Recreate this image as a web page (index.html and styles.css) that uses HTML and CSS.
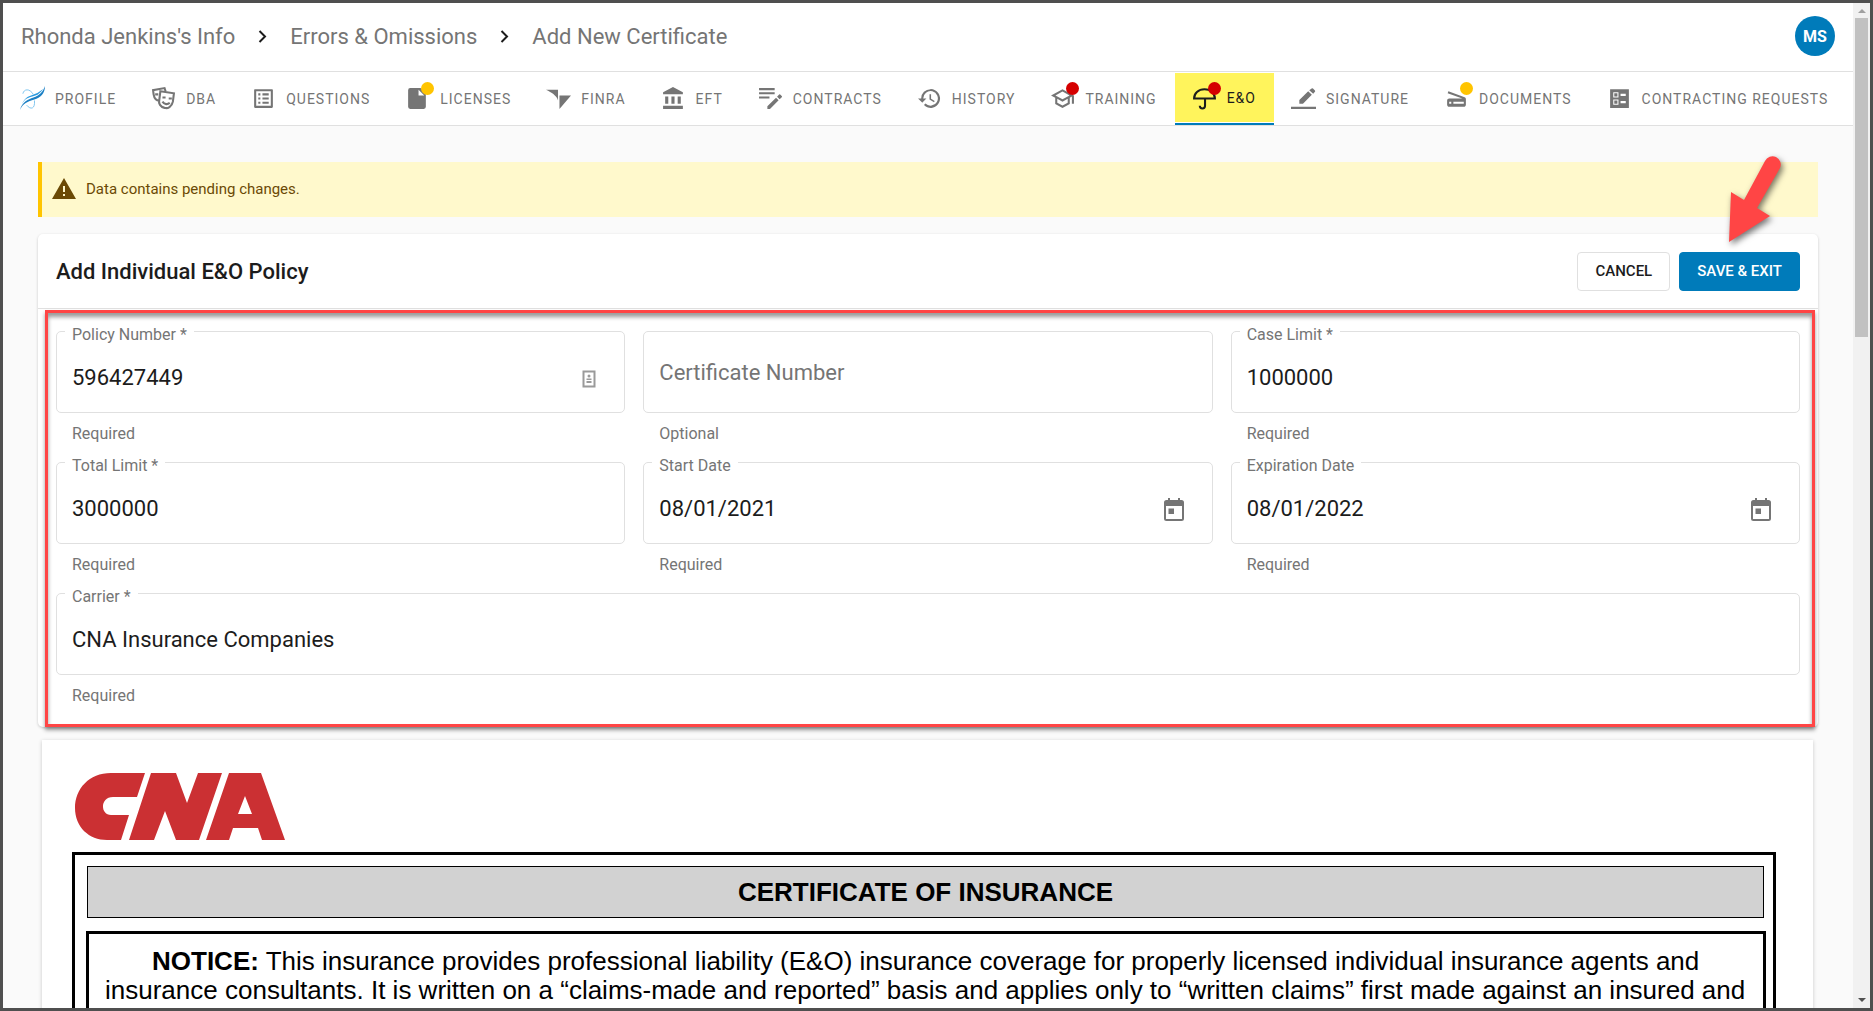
FILE: index.html
```html
<!DOCTYPE html>
<html lang="en">
<head>
<meta charset="utf-8">
<title>Add New Certificate</title>
<link rel="stylesheet" href="styles.css">
</head>
<body>
<div class="window">
  <div class="page">
    <header class="topbar">
      <nav class="crumbs" aria-label="Breadcrumb">
        <a href="#">Rhonda Jenkins's Info</a>
        <svg class="chevron" viewBox="0 0 9 13"><path d="M1.500 1l5.500 5.500L1.500 12"/></svg>
        <a href="#">Errors &amp; Omissions</a>
        <svg class="chevron" viewBox="0 0 9 13"><path d="M1.500 1l5.500 5.500L1.500 12"/></svg>
        <a href="#">Add New Certificate</a>
      </nav>
      <button class="avatar" type="button">MS</button>
    </header>
    <nav class="tabs" aria-label="Sections">
      <a class="tab" href="#"><svg class="icon" viewBox="0 0 26 26"><path d="M0 25C2 17 8 14 14 12 20 10 24 6 26 0c0 8-5 12-11 14C8 16 3 18 0 25z" fill="#1a7fc4"/><path d="M2 19c4-8 10-7 14-9 3-1 6-4 8-7-3 2-5 4-8 5C11 10 5 11 2 19z" fill="#2b9be0"/><path d="M3 8c1-5 7-6 11 1M7 20c4 5 9 4 8-5" fill="none" stroke="#7cc4ee"/></svg><span>PROFILE</span></a>
      <a class="tab" href="#"><svg class="icon" viewBox="0 0 24 24"><g fill="none" stroke="currentColor" stroke-width="2"><path d="M9 5l13 2-1 8c-1 5-5 7-8 6-4-1-6-4-5-8z"/><path d="M8 14C4 14 3 11 2.500 8L2 4l11-2 1 3"/><path d="M11 15c2 3 5 3 7 1"/></g><path d="M11 10h3v2h-3zM17 11h3v2h-3zM4 7h3v2H4z"/></svg><span>DBA</span></a>
      <a class="tab" href="#"><svg class="icon" viewBox="0 0 24 24"><path d="M11 7h6v2h-6zm0 4h6v2h-6zm0 4h6v2h-6zM7 7h2v2H7zm0 4h2v2H7zm0 4h2v2H7zM20.100 3H3.900c-.5 0-.9.4-.9.900v16.200c0 .4.400.900.900.900h16.200c.4 0 .9-.5.9-.9V3.900c0-.5-.5-.9-.9-.9zM19 19H5V5h14v14z"/></svg><span>QUESTIONS</span></a>
      <a class="tab" href="#"><svg class="icon" viewBox="0 0 24 24"><path d="M5 2h10l5 6v12a2 2 0 0 1-2 2H5a2 2 0 0 1-2-2V4a2 2 0 0 1 2-2zM13 3.500V9h5.500z" fill-rule="evenodd"/></svg><i class="dot amber"></i><span>LICENSES</span></a>
      <a class="tab" href="#"><svg class="icon" viewBox="0 0 26 24"><path d="M0 3h12.500v11C11 9 6 6 0 3zM14 9h12L14 23z"/></svg><span>FINRA</span></a>
      <a class="tab" href="#"><svg class="icon" viewBox="0 0 24 24"><path d="M4 10v7h3v-7H4zm6 0v7h3v-7h-3zM2 22h19v-3H2v3zm14-12v7h3v-7h-3zM11.500 1L2 6v2h19V6l-9.500-5z"/></svg><span>EFT</span></a>
      <a class="tab" href="#"><svg class="icon" viewBox="0 0 24 24"><path d="M1 2h15v2H1zm0 4h15v2H1zm0 4h10v2H1zM9 19.500V22h2.500l8.300-8.300-2.500-2.500zM22.800 10.700a.7.700 0 0 0 0-1l-1.500-1.500a.7.700 0 0 0-1 0l-2 2 2.500 2.500z"/></svg><span>CONTRACTS</span></a>
      <a class="tab" href="#"><svg class="icon" viewBox="0 0 24 24"><path d="M13 3a9 9 0 0 0-9 9H1l3.900 3.900.1.100L9 12H6a7 7 0 1 1 2.100 4.900l-1.400 1.400A9 9 0 1 0 13 3zm-1 5v5l4.300 2.500.7-1.200-3.500-2.100V8H12z"/></svg><span>HISTORY</span></a>
      <a class="tab" href="#"><svg class="icon" viewBox="0 0 24 24"><path d="M12 3L1 9l4 2.200v6L12 21l7-3.800v-6l2-1.100V17h2V9L12 3zm6.800 6L12 12.700 5.200 9 12 5.300 18.800 9zM17 16l-5 2.700L7 16v-3.700l5 2.700 5-2.700V16z"/></svg><i class="dot red"></i><span>TRAINING</span></a>
      <a class="tab active" href="#" aria-current="page"><svg class="icon" viewBox="0 0 24 24"><path d="M2 13c0-5 4-9 10-9s10 4 10 9zM12.500 13v7a2.500 2.500 0 0 1-5 0" fill="none" stroke="currentColor" stroke-width="2"/></svg><i class="dot red"></i><span>E&amp;O</span></a>
      <a class="tab" href="#"><svg class="icon" viewBox="0 0 24 24"><path d="M0 20h24v2H0zM8 13.500V17h3.500l8.500-8.500L16.500 5zM23 5.500a1 1 0 0 0 0-1.200l-1.900-1.900a1 1 0 0 0-1.300 0L17.500 4 21.300 7.500z"/></svg><span>SIGNATURE</span></a>
      <a class="tab" href="#"><svg class="icon" viewBox="0 0 24 24"><path d="M19.800 10.700L4.200 5l-.7 1.900L17.600 12H5c-1.100 0-2 .9-2 2v4c0 1.100.9 2 2 2h14c1.100 0 2-.9 2-2v-5.500c0-.8-.5-1.600-1.200-1.800zM7 17H5v-2h2v2zm12 0H9v-2h10v2z"/></svg><i class="dot amber"></i><span>DOCUMENTS</span></a>
      <a class="tab" href="#"><svg class="icon" viewBox="0 0 24 24"><path d="M13 9.500h5v-2h-5v2zm0 7h5v-2h-5v2zM21 21H3V3h18v18zM6 11h5V6H6v5zm1-4h3v3H7V7zM6 18h5v-5H6v5zm1-4h3v3H7v-3z" fill-rule="evenodd"/></svg><span>CONTRACTING REQUESTS</span></a>
    </nav>
    <main class="content">
      <div class="alert" role="status">
        <svg class="warn" viewBox="0 0 24 21"><path d="M12 0l12 21H0zM11 8v6h2V8zm0 8v2h2v-2z" fill-rule="evenodd"/></svg>
        <span>Data contains pending changes.</span>
      </div>
      <form class="card">
        <div class="card-head">
          <h1>Add Individual E&amp;O Policy</h1>
          <div class="actions">
            <button class="btn" type="button">CANCEL</button>
            <span class="save">
              <button class="btn primary" type="button">SAVE &amp; EXIT</button>
              <svg class="arrow" viewBox="0 0 70 100"><path d="M9 91L11 41 24 49 45 10A8 8 0 0 1 60 17L37 57 50 65z"/></svg>
            </span>
          </div>
        </div>
        <div class="fields">
          <div class="field"><label for="policy">Policy Number *</label><div class="control"><input id="policy" type="text" value="596427449"><svg class="contact" viewBox="0 0 14 18"><path d="M1.500 1.500h11v15h-11z" fill="none" stroke="currentColor" stroke-width="2"/><circle cx="7" cy="6" r="1.500"/><path d="M4.500 8.500h5V10h-5zM4.500 11h5v2h-5z"/></svg></div><p>Required</p></div>
          <div class="field unfilled"><div class="control"><input id="certificate" type="text" placeholder="Certificate Number" aria-label="Certificate Number"></div><p>Optional</p></div>
          <div class="field"><label for="case">Case Limit *</label><div class="control"><input id="case" type="text" value="1000000"></div><p>Required</p></div>
          <div class="field"><label for="total">Total Limit *</label><div class="control"><input id="total" type="text" value="3000000"></div><p>Required</p></div>
          <div class="field"><label for="start">Start Date</label><div class="control"><input id="start" type="text" value="08/01/2021"><button class="pick" type="button" aria-label="Choose start date"><svg viewBox="0 0 20 23"><path d="M4 0h2v2h8V0h2v2h1.500A2.500 2.500 0 0 1 20 4.500v16a2.500 2.500 0 0 1-2.500 2.500h-15A2.500 2.500 0 0 1 0 20.500v-16A2.500 2.500 0 0 1 2.500 2H4zM2 8v13h16V8zM4.500 10.500h5.500v5.500H4.500z" fill-rule="evenodd"/></svg></button></div><p>Required</p></div>
          <div class="field"><label for="expiry">Expiration Date</label><div class="control"><input id="expiry" type="text" value="08/01/2022"><button class="pick" type="button" aria-label="Choose expiration date"><svg viewBox="0 0 20 23"><path d="M4 0h2v2h8V0h2v2h1.500A2.500 2.500 0 0 1 20 4.500v16a2.500 2.500 0 0 1-2.500 2.500h-15A2.500 2.500 0 0 1 0 20.500v-16A2.500 2.500 0 0 1 2.500 2H4zM2 8v13h16V8zM4.500 10.500h5.500v5.500H4.500z" fill-rule="evenodd"/></svg></button></div><p>Required</p></div>
          <div class="field full"><label for="carrier">Carrier *</label><div class="control"><input id="carrier" type="text" value="CNA Insurance Companies"></div><p>Required</p></div>
        </div>
      </form>
      <article class="document">
        <svg class="cna" viewBox="0 0 210 67" role="img" aria-label="CNA"><path d="M70 0H36C14 0 0 16 0 35s14 32 32 32h14l8-25H36c-11 0-11-18 2-18h24zM76 0h25l11 30L123 0h24l-23 67h-23L90 38 79 67H54zM154 0h32l24 67h-23l-4-12h-25l-4 12h-23zM170 23l-7 18h14z" fill-rule="evenodd"/></svg>
        <div class="frame">
          <h2>CERTIFICATE OF INSURANCE</h2>
          <div class="notice">
            <p><b>NOTICE:</b> This insurance provides professional liability (E&amp;O) insurance coverage for properly licensed individual insurance agents and<br>insurance consultants. It is written on a “claims-made and reported” basis and applies only to “written claims” first made against an insured and</p>
          </div>
        </div>
      </article>
    </main>
  </div>
  <div class="scroll" aria-hidden="true"><i class="up"></i><i class="thumb"></i><i class="down"></i></div>
</div>
</body>
</html>
```
FILE: styles.css
```css
* { box-sizing: border-box; }
body { margin: 0; font-family: Roboto, "Liberation Sans", sans-serif; color: #1c1c1c; }
a { color: inherit; text-decoration: none; }
h1, h2, p { margin: 0; }
button, input { font: inherit; color: inherit; }
svg { fill: currentColor; flex: none; display: block; }

.window { display: flex; height: 100vh; border: 3px solid #4f4f4f; overflow: hidden; }
.page { flex: 1; min-width: 0; background: #fafafa; overflow: hidden; }

.topbar { display: flex; align-items: center; justify-content: space-between; height: 69px; padding: 0 18px 2px; background: #fff; border-bottom: 1px solid #e0e0e0; }
.crumbs { display: flex; align-items: center; gap: 23px; font-size: 22px; color: #757575; }
.chevron { width: 9px; height: 13px; fill: none; stroke: #1c1c1c; stroke-width: 2; }
.avatar { width: 40px; height: 40px; padding: 0; border: 0; border-radius: 50%; background: #007bba; color: #fff; font-size: 16px; font-weight: 700; }

.tabs { display: flex; height: 54px; background: #fff; border-bottom: 1px solid #e0e0e0; }
.tab { position: relative; display: flex; align-items: center; gap: 10px; padding: 0 18px 0 17px; font-size: 14px; letter-spacing: 1px; color: #757575; white-space: nowrap; }
.icon { width: 25px; height: 25px; }
.dot { position: absolute; left: 33px; top: 10px; width: 13px; height: 13px; border-radius: 50%; }
.amber { background: #ffc400; }
.red { background: #d50000; }
.active { color: #1c1c1c; background: #fff45c; border-bottom: 2px solid #007bba; box-shadow: inset 0 1px #fff, inset 0 -1px #fff; }

.content { padding: 36px 35px 0; }
.alert { display: flex; align-items: center; gap: 10px; height: 55px; padding: 0 0 2px 10px; border-left: 4px solid #ffc400; background: #fff9cc; color: #6b4a05; font-size: 15px; }
.warn { width: 24px; height: 21px; }

.card { margin-top: 17px; background: #fff; border-radius: 5px; box-shadow: 0 1px 3px #0003; }
.card-head { display: flex; align-items: center; justify-content: space-between; height: 75px; padding: 0 18px; border-bottom: 1px solid #e0e0e0; }
h1 { font-size: 22px; font-weight: 500; }
.actions { display: flex; gap: 9px; }
.btn { height: 39px; padding: 0 17px; border: 1px solid #e0e0e0; border-radius: 4px; background: #fff; font-size: 15px; font-weight: 500; }
.primary { border-color: #007bba; background: #007bba; color: #fff; }
.save { position: relative; }
.arrow { position: absolute; right: 10px; bottom: 40px; width: 70px; height: 100px; fill: #ff4545; filter: drop-shadow(2px 3px 3px #0008); }

.fields { display: grid; grid-template-columns: repeat(3, 1fr); column-gap: 18px; margin: 1px 3px 0 7px; padding: 18px 12px 0 8px; border: 3px solid #ff4545; box-shadow: 0 3px 4px #0006, inset 0 4px 4px #0006; }
.field { position: relative; height: 131px; }
.full { grid-column: 1 / -1; }
.field label { position: absolute; left: 9px; top: -6px; padding: 0 7px; background: #fff; color: #757575; font-size: 16px; line-height: 20px; }
.control { display: flex; align-items: center; height: 82px; padding: 0 28px 0 15px; border: 1px solid #e0e0e0; border-radius: 5px; }
.control input { flex: 1; min-width: 0; padding: 10px 0 0; border: 0; outline: 0; background: none; font-size: 22px; }
.control input::placeholder { color: #757575; opacity: 1; }
.unfilled input { padding: 0; }
.field p { padding: 11px 16px; color: #757575; font-size: 16px; line-height: 20px; }
.contact { width: 14px; height: 18px; margin-top: 13px; color: #9a9a9a; }
.pick { padding: 12px 0 0; border: 0; background: none; color: #757575; }
.pick svg { width: 20px; height: 23px; }

.document { margin: 13px 5px 0 4px; padding: 33px 37px 0 30px; background: #fff; box-shadow: 0 1px 4px #0003; font-family: "Liberation Sans", Arial, sans-serif; color: #000; }
.cna { width: 210px; height: 67px; margin: 0 0 12px 3px; fill: #cb3033; }
.frame { height: 400px; padding: 11px 7px 0 11px; border: 3px solid #000; }
h2 { margin: 0 2px 0 1px; border: 1px solid #000; background: #d2d2d2; font-size: 26px; line-height: 50px; text-align: center; }
.notice { height: 400px; margin-top: 13px; padding: 13px 16px; border: 3px solid #000; font-size: 26px; line-height: 29px; white-space: nowrap; }
.notice p { text-indent: 47px; }

.scroll { display: flex; flex-direction: column; align-items: center; width: 17px; background: #f1f1f1; }
.up, .down { border: 4px solid transparent; }
.up { margin: 2px 0 5px; border-bottom-color: #a0a0a0; }
.thumb { width: 13px; height: 319px; background: #c1c1c1; }
.down { margin: auto 0 2px; border-top-color: #505050; }
```
